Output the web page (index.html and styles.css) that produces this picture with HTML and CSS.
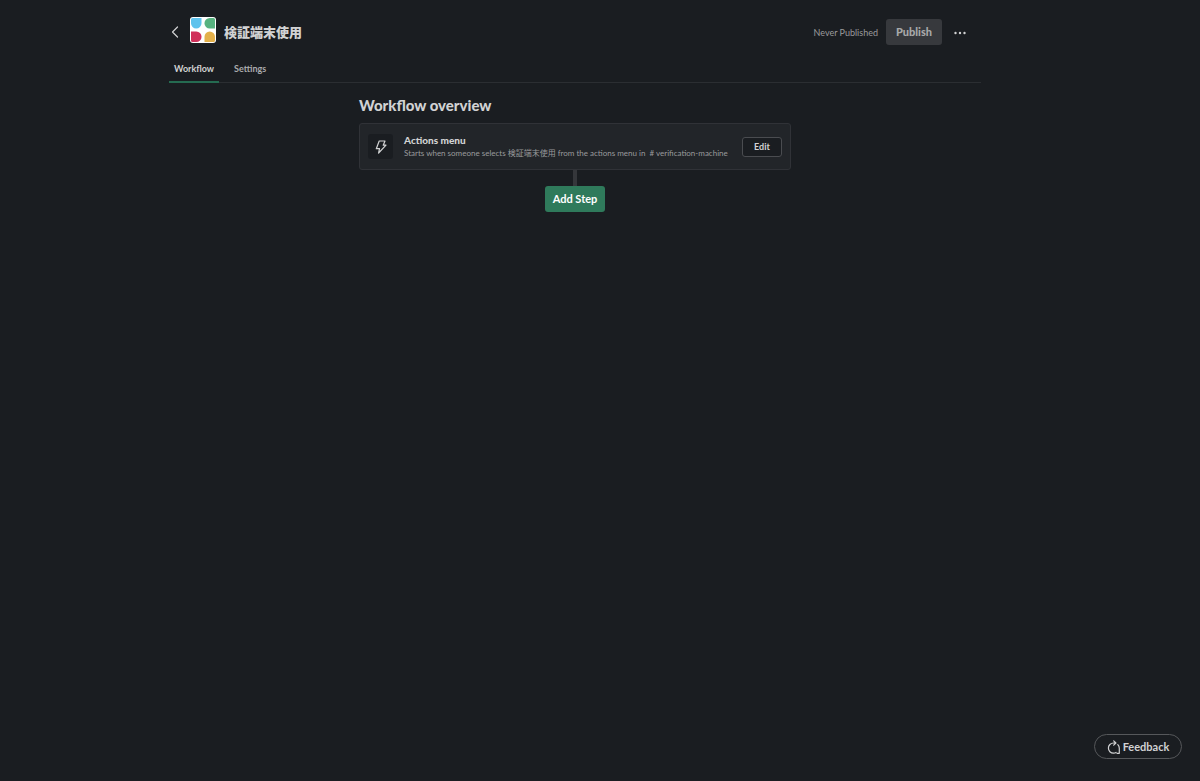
FILE: index.html
```html
<!DOCTYPE html>
<html lang="en">
<head>
<meta charset="UTF-8">
<title>検証端末使用 – Workflow Builder</title>
<meta name="viewport" content="width=device-width,initial-scale=1">
<link rel="stylesheet" href="styles.css">
</head>
<body>
<div class="page">

  <!-- top bar -->
  <header class="topbar">
    <button class="icon-btn back" aria-label="Back">
      <svg viewBox="0 0 8 12" width="8" height="12"><path d="M6.500 1 1.500 6l5 5" fill="none" stroke="currentColor" stroke-width="1.200" stroke-linecap="round" stroke-linejoin="round"/></svg>
    </button>
    <svg class="logo" viewBox="0 0 26 26" width="26" height="26" aria-hidden="true">
      <rect width="26" height="26" rx="3" fill="#fff"/>
      <path d="M2.500 1H11.500v5.200a5.300 5.300 0 0 1-5.300 5.300 5.300 5.300 0 0 1-5.200-5.300V2.500A1.500 1.500 0 0 1 2.500 1z" fill="#5fc3ed"/>
      <path d="M19.700 1h3.800A1.500 1.500 0 0 1 25 2.500v9h-5.300a5.250 5.250 0 0 1 0-10.500z" fill="#57b280"/>
      <path d="M1 14.500h5.300a5.250 5.250 0 0 1 0 10.500H2.500A1.500 1.500 0 0 1 1 23.500z" fill="#d0305a"/>
      <path d="M19.700 14.500a5.300 5.300 0 0 1 5.300 5.300v3.700a1.500 1.500 0 0 1-1.500 1.500h-9v-5.200a5.300 5.300 0 0 1 5.200-5.300z" fill="#e3b04a"/>
    </svg>
    <h1>検証端末使用</h1>
    <span class="status">Never Published</span>
    <button class="publish" disabled>Publish</button>
    <button class="icon-btn more" aria-label="More options">
      <svg viewBox="0 0 12 4" width="12" height="4" fill="currentColor"><circle cx="1.500" cy="2" r="1.200"/><circle cx="6" cy="2" r="1.200"/><circle cx="10.500" cy="2" r="1.200"/></svg>
    </button>
  </header>

  <nav class="tabs">
    <a class="tab active" href="#workflow">Workflow</a>
    <a class="tab" href="#settings">Settings</a>
  </nav>

  <main id="workflow">
    <h2>Workflow overview</h2>
    <section class="card">
      <span class="card-icon">
        <svg viewBox="0 0 12 14" width="12" height="14"><path d="M4.200 1h5.800L8.200 5.200h2.800L3.600 13l.9-4.300H1.300z" fill="none" stroke="currentColor" stroke-width="1.200" stroke-linejoin="round"/></svg>
      </span>
      <div class="card-text">
        <h3>Actions menu</h3>
        <p>Starts when someone selects 検証端末使用 from the actions menu in <span class="channel"># verification-machine</span></p>
      </div>
      <button class="edit">Edit</button>
    </section>
    <div class="connector"></div>
    <button class="add-step">Add Step</button>
  </main>

</div>

<button class="feedback">
  <svg viewBox="0 0 14 14" width="14" height="14" fill="none" stroke="currentColor" stroke-width="1.200" stroke-linecap="round" stroke-linejoin="round"><path d="M8.500 3H6.500a5 5 0 0 0 0 10.200c1 0 1.800-.2 2.600-.7M6.700.8 8.900 3 6.700 5.200M10.800 4.600c1 1 1.500 2.200 1.500 3.700v5h-2.300"/></svg>
  Feedback
</button>
</body>
</html>
```

FILE: styles.css
```css
:root{
  --bg:#1a1d21;--panel:#222529;--line:#35373b;
  --fg:#d1d2d3;--muted:#9a9b9d;--green:#2f7a5b;
}
*{box-sizing:border-box;margin:0}
body{font-family:Lato,"Noto Sans CJK JP",sans-serif;font-size:9px;line-height:12px;background:var(--bg);color:var(--fg);min-height:100vh;padding:16px 50px 0 0}
button{font:inherit;color:inherit;border:0;background:transparent;padding:0;cursor:pointer}
svg{display:block}
.page{max-width:812px;margin:0 auto}

/* top bar */
.topbar{display:flex;align-items:center;height:32px;padding:0 13px 4px 2px}
.icon-btn{display:grid;place-items:center;height:24px}
.back{width:8px;margin:4px 11px 0 0}
.logo{flex:none;margin-right:8px}
h1{font-size:13px;line-height:16px;font-weight:900;margin-top:4px;flex:1}
.status{color:var(--muted);margin-top:5px}
.publish{width:56px;height:26px;margin:4px 10px 0 8px;border-radius:3px;background:#37393d;color:#a8a9aa;font-size:11px;font-weight:900;cursor:default}
.more{width:16px;margin-top:5px}

/* tabs */
.tabs{display:flex;gap:10px;margin-top:8px;border-bottom:1px solid #2b2e32}
.tab{padding:7px 5px 6px;color:#ababad;font-weight:700;text-decoration:none;margin-bottom:-1px;border-bottom:2px solid transparent}
.tab.active{color:var(--fg);border-color:#256b51}

/* overview */
main{display:flex;flex-direction:column;align-items:center;max-width:432px;margin:0 auto;padding-top:12px}
h2{align-self:stretch;font-size:15px;line-height:20px;font-weight:900}
.card{display:flex;align-items:center;width:100%;margin-top:8px;padding:10px 8px;background:var(--panel);border:1px solid #303237;border-radius:3px}
.card-icon{flex:none;display:grid;place-items:center;width:25px;height:25px;margin-right:11px;border-radius:3px;background:var(--bg)}
.card-text{flex:1;white-space:nowrap}
h3{font-size:10px;line-height:13px;font-weight:900}
.card p{color:var(--muted);font-size:8px}
.channel{margin-left:2px}
.edit{flex:none;width:40px;height:20px;border:1px solid #4a4c50;border-radius:3px;background:var(--bg);font-weight:700}
.connector{width:4px;height:16px;background:var(--line)}
.add-step{width:60px;height:26px;border-radius:3px;background:var(--green);color:#fff;font-size:11px;font-weight:700}

/* floating feedback button */
.feedback{position:fixed;right:18px;bottom:22px;display:flex;align-items:center;justify-content:center;gap:2px;width:88px;height:25px;border:1px solid #56585b;border-radius:13px;background:var(--bg);font-size:11px;font-weight:700}
```
